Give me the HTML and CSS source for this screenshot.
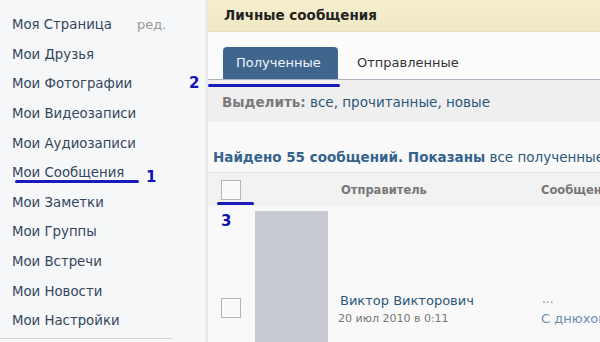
FILE: index.html
```html
<!DOCTYPE html>
<html lang="ru">
<head>
    <meta charset="UTF-8">
    <title>Личные сообщения</title>
    <link rel="stylesheet" href="styles.css">
</head>
<body>
    <nav class="sidebar">
        <ul class="menu">
            <li><a href="#">Моя Страница</a><span class="edit">ред.</span></li>
            <li><a href="#">Мои Друзья</a></li>
            <li><a href="#">Мои Фотографии</a></li>
            <li><a href="#">Мои Видеозаписи</a></li>
            <li><a href="#">Мои Аудиозаписи</a></li>
            <li><a href="#">Мои Сообщения</a></li>
            <li><a href="#">Мои Заметки</a></li>
            <li><a href="#">Мои Группы</a></li>
            <li><a href="#">Мои Встречи</a></li>
            <li><a href="#">Мои Новости</a></li>
            <li><a href="#">Мои Настройки</a></li>
        </ul>
        <div class="menu-bottom"></div>
    </nav>

    <main class="content">
        <div class="page-title">Личные сообщения</div>
        <div class="tabs">
            <a href="#" class="tab active">Полученные</a>
            <a href="#" class="tab">Отправленные</a>
        </div>
        <div class="select-bar">
            <b>Выделить:</b> <a href="#">все</a>, <a href="#">прочитанные</a>, <a href="#">новые</a>
        </div>
        <div class="summary"><b>Найдено 55 сообщений. Показаны</b> все полученные</div>
        <div class="table-head">
            <span class="check"></span>
            <span class="col-from">Отправитель</span>
            <span class="col-msg">Сообщение</span>
        </div>
        <div class="msg-row">
            <span class="check"></span>
            <div class="avatar"></div>
            <div class="from">
                <a href="#">Виктор Викторович</a>
                <div class="date">20 июл 2010 в 0:11</div>
            </div>
            <div class="msg">
                <div class="dots">...</div>
                <a href="#">С днюхой</a>
            </div>
        </div>
    </main>

    <!-- пометки поверх скриншота -->
    <div class="mark line-1"></div><div class="mark num num-1">1</div>
    <div class="mark line-2"></div><div class="mark num num-2">2</div>
    <div class="mark line-3"></div><div class="mark num num-3">3</div>
</body>
</html>
```

FILE: styles.css
```css
body { margin: 0; width: 600px; height: 342px; overflow: hidden; display: flex; position: relative; font-family: "DejaVu Sans", Tahoma, sans-serif; font-size: 12px; background: #f9f9f9; }
a { text-decoration: none; color: #2b587a; }

.sidebar { width: 205px; flex: none; background: #f6f7f9; border-right: 2px solid #ececec; position: relative; }
.menu { list-style: none; margin: 0; padding: 10px 0 0 12px; }
.menu li { height: 29.6px; display: flex; align-items: center; }
.menu a { color: #34465c; font-size: 13.3px; width: 125px; }
.menu .edit { color: #9a9a9a; font-size: 13px; }
.menu-bottom { position: absolute; left: 0; bottom: 3px; width: 172px; border-top: 1px solid #d4d4d4; }

.content { flex: 1; min-width: 0; overflow: hidden; background: #f9f9f9; border-left: 1px solid #e4e4e4; }
.page-title { height: 31px; line-height: 31px; padding-left: 16px; background: linear-gradient(#f5efcf, #efe8c4); border-bottom: 1px solid #e6e0c0; font-weight: bold; font-size: 13.5px; color: #222; }
.tabs { display: flex; align-items: flex-end; padding: 15px 0 0 15px; border-bottom: 1px solid #a9b4bf; background: #fbfbfb; }
.tab { height: 32px; line-height: 32px; padding: 0 14px 0 13px; font-size: 13px; color: #333; }
.tab.active { background: #40668e; color: #eef3f8; border-radius: 4px 4px 0 0; width: 88px; margin-right: 6px; }
.select-bar { height: 42px; line-height: 44px; padding-left: 14px; background: #efefef; color: #2b587a; font-size: 13.5px; }
.select-bar b { color: #7a7a7a; }
.summary { margin-top: 20px; height: 30px; line-height: 30px; padding-left: 5px; color: #2b587a; font-size: 13.5px; white-space: nowrap; overflow: hidden; border-bottom: 1px solid #e2e2e2; }
.summary b { color: #36638e; }

.table-head { height: 33px; display: grid; grid-template-columns: 133px 200px 1fr; align-items: center; background: #f2f2f2; color: #777; font-weight: bold; font-size: 11.5px; white-space: nowrap; overflow: hidden; }
.check { width: 18px; height: 18px; border: 1px solid #b5b5b5; background: #fafafa; margin-left: 13px; }
.msg-row { display: grid; grid-template-columns: 47px 73px 213px 1fr; align-items: center; margin-top: 5px; white-space: nowrap; overflow: hidden; }
.msg-row .check { margin-top: 12px; }
.avatar { height: 182px; background: #c7cad3; }
.from { padding-left: 12px; padding-top: 14px; }
.from a { font-size: 13px; }
.date { color: #777; font-size: 11px; margin-top: 4px; margin-left: -2px; }
.msg { padding-top: 14px; }
.msg .dots { color: #888; padding-left: 1px; line-height: 14px; }
.msg a { color: #6a8fb3; font-size: 13px; display: block; margin-top: 5px; }

.mark { position: absolute; color: #1212b4; font-weight: bold; font-family: "DejaVu Sans", sans-serif; }
.num { font-size: 15px; }
.line-1 { left: 15px; top: 180px; width: 124px; height: 3px; background: #1a1ab8; border-radius: 2px; }
.num-1 { left: 146px; top: 168px; }
.line-2 { left: 208px; top: 84px; width: 132px; height: 3px; background: #1a1ab8; border-radius: 2px; }
.num-2 { left: 189px; top: 74px; }
.line-3 { left: 217px; top: 202px; width: 37px; height: 3px; background: #1a1ab8; border-radius: 2px; }
.num-3 { left: 221px; top: 212px; }
```
